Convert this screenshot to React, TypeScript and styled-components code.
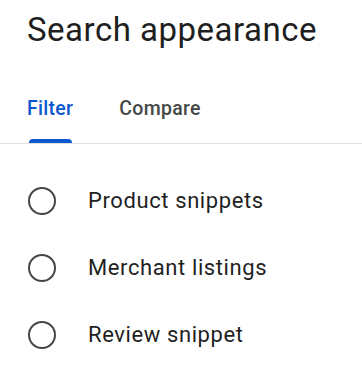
import styled, { createGlobalStyle } from "styled-components";

const GlobalStyle = createGlobalStyle`
  html, body {
    margin: 0;
    padding: 0;
    background: #ffffff;
  }
  body {
    font-family: Roboto, "Noto Sans", Arial, sans-serif;
    -webkit-font-smoothing: antialiased;
  }
`;

const Panel = styled.div`
  width: 362px;
  height: 379px;
  background: #ffffff;
  overflow: hidden;
`;

const Title = styled.h1`
  margin: 0;
  padding: 10px 0 0 27px;
  height: 48px;
  font-size: 33px;
  font-weight: 400;
  line-height: 40px;
  color: #1f1f1f;
  letter-spacing: 0.5px;
`;

const TabBar = styled.div`
  display: flex;
  margin-top: 34px;
  padding-left: 27px;
  border-bottom: 1px solid #e0e0e0;
`;

const Tab = styled.div<{ $active?: boolean }>`
  position: relative;
  height: 46px;
  padding-top: 5px;
  margin-right: 46px;
  font-size: 19.5px;
  font-weight: 500;
  line-height: 24px;
  letter-spacing: 0.3px;
  color: ${(p) => (p.$active ? "#0b57d0" : "#444746")};

  &::after {
    content: "";
    display: ${(p) => (p.$active ? "block" : "none")};
    position: absolute;
    left: 2px;
    right: 1px;
    bottom: 0;
    height: 4px;
    border-radius: 4px 4px 0 0;
    background: #0b57d0;
  }
`;

const Options = styled.div`
  display: flex;
  flex-direction: column;
  padding: 23px 0 0 28px;
`;

const Option = styled.label`
  display: flex;
  align-items: center;
  height: 67px;
  gap: 32px;
  cursor: pointer;
`;

const Radio = styled.span`
  box-sizing: border-box;
  width: 28px;
  height: 28px;
  border: 2.7px solid #444746;
  border-radius: 50%;
  flex: none;
`;

const Label = styled.span`
  font-size: 22px;
  line-height: 28px;
  letter-spacing: 0.6px;
  color: #1f1f1f;
`;

const OPTIONS = ["Product snippets", "Merchant listings", "Review snippet"];

export default function App() {
  return (
    <Panel>
      <GlobalStyle />
      <Title>Search appearance</Title>
      <TabBar>
        <Tab $active>Filter</Tab>
        <Tab>Compare</Tab>
      </TabBar>
      <Options>
        {OPTIONS.map((name) => (
          <Option key={name}>
            <Radio />
            <Label>{name}</Label>
          </Option>
        ))}
      </Options>
    </Panel>
  );
}
